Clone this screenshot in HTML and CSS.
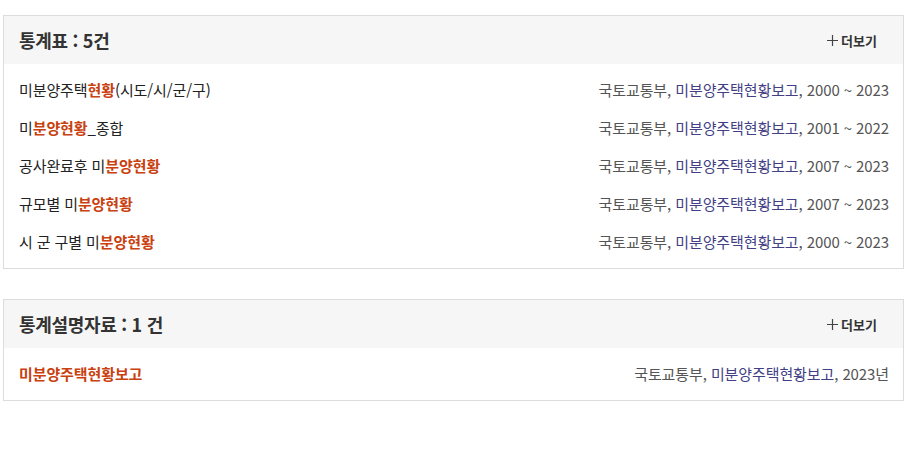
FILE: index.html
```html
<!DOCTYPE html>
<html lang="ko">
<head>
<meta charset="utf-8">
<link rel="stylesheet" href="styles.css">
</head>
<body>
<div class="page">
  <section class="box">
    <div class="box-head">
      <h2 class="box-title">통계표 : 5건</h2>
      <a class="more" href="#"><svg class="plus" width="11" height="11" viewBox="0 0 11 11"><path d="M5.5 0V11M0 5.5H11" stroke="#444" stroke-width="1.2" fill="none"/></svg>더보기</a>
    </div>
    <ul class="list">
      <li class="row"><span class="name">미분양주택<em>현황</em>(시도/시/군/구)</span><span class="src">국토교통부, <span class="rep">미분양주택현황보고</span>, 2000 ~ 2023</span></li>
      <li class="row"><span class="name">미<em>분양현황</em>_종합</span><span class="src">국토교통부, <span class="rep">미분양주택현황보고</span>, 2001 ~ 2022</span></li>
      <li class="row"><span class="name">공사완료후 미<em>분양현황</em></span><span class="src">국토교통부, <span class="rep">미분양주택현황보고</span>, 2007 ~ 2023</span></li>
      <li class="row"><span class="name">규모별 미<em>분양현황</em></span><span class="src">국토교통부, <span class="rep">미분양주택현황보고</span>, 2007 ~ 2023</span></li>
      <li class="row"><span class="name">시 군 구별 미<em>분양현황</em></span><span class="src">국토교통부, <span class="rep">미분양주택현황보고</span>, 2000 ~ 2023</span></li>
    </ul>
  </section>
  <section class="box">
    <div class="box-head">
      <h2 class="box-title">통계설명자료 : 1 건</h2>
      <a class="more" href="#"><svg class="plus" width="11" height="11" viewBox="0 0 11 11"><path d="M5.5 0V11M0 5.5H11" stroke="#444" stroke-width="1.2" fill="none"/></svg>더보기</a>
    </div>
    <ul class="list">
      <li class="row"><span class="name"><em>미분양주택현황보고</em></span><span class="src">국토교통부, <span class="rep">미분양주택현황보고</span>, 2023년</span></li>
    </ul>
  </section>
</div>
</body>
</html>
```
FILE: styles.css
```css
* { box-sizing: border-box; }
html, body { margin: 0; padding: 0; background: #fff; }
body {
  font-family: "Noto Sans CJK KR", "Noto Sans", sans-serif;
  color: #333;
}
.page {
  padding: 15px 5px 0 3px;
  display: flex;
  flex-direction: column;
  gap: 30px;
}
.box {
  border: 1px solid #dcdcdc;
}
.box-head {
  height: 48px;
  background: #f6f6f6;
  display: flex;
  align-items: center;
  justify-content: space-between;
  padding: 0 26px 0 15px;
}
.box-title {
  margin: 0;
  font-size: 18px;
  font-weight: 700;
  color: #333;
  letter-spacing: -0.3px;
}
.more {
  font-size: 13px;
  font-weight: 700;
  color: #333;
  text-decoration: none;
  display: flex;
  align-items: center;
  gap: 3px;
}
.plus { display: block; }
.list {
  list-style: none;
  margin: 0;
  padding: 6px 14px 8px 15px;
}
.row {
  height: 38px;
  display: flex;
  align-items: center;
  justify-content: space-between;
  font-size: 15px;
  letter-spacing: -0.1px;
}
.name { color: #222; }
.name em {
  font-style: normal;
  font-weight: 700;
  color: #c8410f;
}
.src { color: #555; }
.rep { color: #433f85; }
```
